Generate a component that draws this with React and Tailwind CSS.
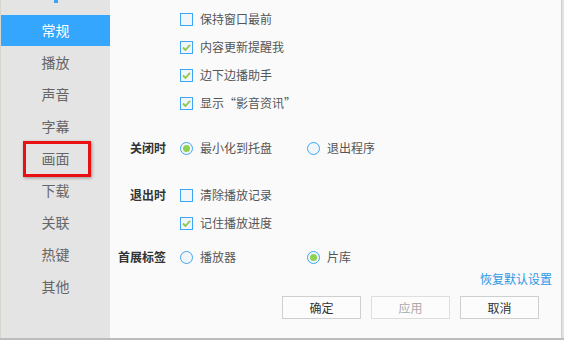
import React from "react";

const font = { fontFamily: '"Noto Sans CJK SC", "Noto Sans", sans-serif' };

function Check({ checked }) {
  return (
    <span className="w-[13px] h-[13px] border border-[#3ea6f5] bg-[#f1f6fb] flex items-center justify-center shrink-0">
      {checked && (
        <svg width="11" height="11" viewBox="0 0 11 11">
          <path d="M2 5.5 L4.5 8 L9 2.8" fill="none" stroke="#8cc84b" strokeWidth="1.8" />
        </svg>
      )}
    </span>
  );
}

function Radio({ checked }) {
  return (
    <span className="w-[13px] h-[13px] rounded-full border border-[#3ea6f5] bg-[#f1f6fb] flex items-center justify-center shrink-0">
      {checked && <span className="w-[7px] h-[7px] rounded-full bg-[#8fd14f]" />}
    </span>
  );
}

function Row({ label, children, className = "" }) {
  return (
    <div className={"flex items-center h-[28px] " + className}>
      <div className="w-[56px] text-right font-bold text-[12px] text-[#333]">{label}</div>
      <div className="ml-[14px] flex items-center">{children}</div>
    </div>
  );
}

function Opt({ type, checked, text, w }) {
  return (
    <div className="flex items-center" style={w ? { width: w } : undefined}>
      {type === "c" ? <Check checked={checked} /> : <Radio checked={checked} />}
      <span className="ml-[7px] text-[12px] text-[#555]">{text}</span>
    </div>
  );
}

export default function App() {
  const items = ["播放", "声音", "字幕", "画面", "下载", "关联", "热键", "其他"];
  return (
    <div className="w-[564px] h-[340px] flex bg-[#fafafa] border-b-[2px] border-[#bcbcbc] overflow-hidden" style={font}>
      <div className="w-[110px] h-full bg-[#e4e4e4] border-l border-[#d6d6cf] relative">
        <div className="absolute left-[53px] top-0 w-[4px] h-[3px] bg-[#3aa5f8]" />
        <div className="mt-[15px] h-[31px] bg-[#35a6fd] text-white text-[14px] flex items-center justify-center">常规</div>
        {items.map((t) => (
          <div key={t} className="h-[32px] flex items-center justify-center text-[14px] text-[#666] relative">
            {t}
            {t === "画面" && (
              <div className="absolute left-[22px] top-[-1px] w-[68px] h-[36px] border-[3px] border-[#e81010] shadow-[1px_1px_3px_rgba(0,0,0,0.35)]" />
            )}
          </div>
        ))}
      </div>
      <div className="flex-1 flex flex-col">
        <div className="mt-[5px]">
          <Row label=""><Opt type="c" text="保持窗口最前" /></Row>
          <Row label=""><Opt type="c" checked text="内容更新提醒我" /></Row>
          <Row label=""><Opt type="c" checked text="边下边播助手" /></Row>
          <Row label=""><Opt type="c" checked text="显示“影音资讯”" /></Row>
        </div>
        <Row label="关闭时" className="mt-[17px]">
          <Opt type="r" checked text="最小化到托盘" w={127} />
          <Opt type="r" text="退出程序" />
        </Row>
        <div className="mt-[19px]">
          <Row label="退出时"><Opt type="c" text="清除播放记录" /></Row>
          <Row label=""><Opt type="c" checked text="记住播放进度" /></Row>
        </div>
        <Row label="首展标签" className="mt-[6px]">
          <Opt type="r" text="播放器" w={127} />
          <Opt type="r" checked text="片库" />
        </Row>
        <div className="h-[14px] flex justify-end pr-[9px] mt-[1px]">
          <span className="text-[12px] text-[#2a98e6] leading-[14px]">恢复默认设置</span>
        </div>
        <div className="flex mt-[10px] ml-[172px] gap-[10px]">
          <div className="w-[79px] h-[23px] border border-[#cfcfcf] bg-[#fcfcfc] flex items-center justify-center text-[12px] text-[#333]">确定</div>
          <div className="w-[79px] h-[23px] border border-[#dedede] bg-[#fcfcfc] flex items-center justify-center text-[12px] text-[#aaa]">应用</div>
          <div className="w-[79px] h-[23px] border border-[#cfcfcf] bg-[#fcfcfc] flex items-center justify-center text-[12px] text-[#333]">取消</div>
        </div>
      </div>
      <div className="w-[3px] h-full bg-[#e2e2e2] border-l border-[#d0d0d0]" />
    </div>
  );
}
